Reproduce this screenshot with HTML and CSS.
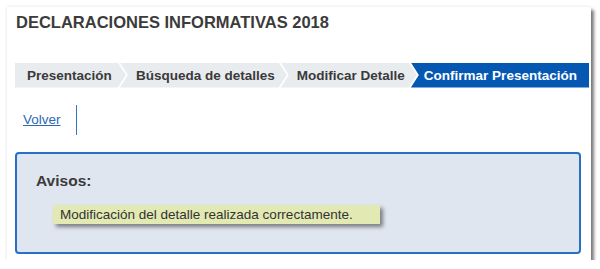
FILE: index.html
```html
<!DOCTYPE html>
<html lang="es">
<head>
<meta charset="utf-8">
<title>Declaraciones informativas 2018</title>
<link rel="stylesheet" href="styles.css">
</head>
<body>
<div class="frame">
  <h1 class="title">DECLARACIONES INFORMATIVAS 2018</h1>
  <ol class="steps">
    <li class="step first">Presentación</li>
    <li class="step">Búsqueda de detalles</li>
    <li class="step">Modificar Detalle</li>
    <li class="step active">Confirmar Presentación</li>
  </ol>
  <div class="actions">
    <a class="link" href="#">Volver</a>
    <span class="divider"></span>
  </div>
  <div class="avisos">
    <h2 class="avisos-title">Avisos:</h2>
    <div class="msg">Modificación del detalle realizada correctamente.</div>
  </div>
</div>
</body>
</html>
```

FILE: styles.css
```css
html, body {
  margin: 0;
  padding: 0;
  background: #ffffff;
}
body {
  padding: 7px 0 0 7px;
  font-family: "Liberation Sans", Arial, sans-serif;
  color: #3a3a3a;
}
.frame {
  box-sizing: border-box;
  width: 584px;
  height: 253px;
  background: #ffffff;
  padding: 0 2px 0 8px;
  box-shadow: 3px 3px 3px rgba(0, 0, 0, 0.5), 0 0 3px rgba(0, 0, 0, 0.12);
  overflow: hidden;
}
.title {
  margin: 4.5px 0 0 1px;
  font-size: 16.5px;
  line-height: 20px;
  font-weight: bold;
  color: #3b3b3b;
}
.steps {
  list-style: none;
  margin: 31px 0 0 0;
  padding: 0;
  display: flex;
  height: 25px;
}
.step {
  flex: 1 1 auto;
  background: #e9ecef;
  font-size: 13.5px;
  font-weight: bold;
  line-height: 25px;
  white-space: nowrap;
  text-align: center;
  padding: 0 10px 0 14px;
  margin-left: -6px;
  clip-path: polygon(0 0, calc(100% - 8px) 0, 100% 50%, calc(100% - 8px) 100%, 0 100%, 8px 50%);
}
.step.first {
  margin-left: 0;
  padding: 0 12px 0 10px;
  clip-path: polygon(0 0, calc(100% - 8px) 0, 100% 50%, calc(100% - 8px) 100%, 0 100%);
}
.step.active {
  background: #0558b2;
  color: #ffffff;
  text-align: left;
  clip-path: polygon(0 0, 100% 0, 100% 100%, 0 100%, 8px 50%);
  padding: 0 8px 0 13px;
}
.actions {
  display: flex;
  align-items: center;
  height: 30px;
  margin-top: 17px;
  padding-left: 8px;
}
.link {
  font-size: 13.5px;
  line-height: 30px;
  color: #2a6ab5;
  text-decoration: underline;
}
.divider {
  width: 1px;
  height: 30px;
  background: #2f78c4;
  margin-left: 15px;
}
.avisos {
  box-sizing: border-box;
  margin: 17px 8px 0 0;
  height: 102px;
  background: #dfe6ef;
  border: 2px solid #2471c6;
  border-radius: 4px;
  padding: 18px 0 0 19px;
}
.avisos-title {
  margin: 0;
  font-size: 15.5px;
  line-height: 18px;
  font-weight: bold;
  color: #3a3a3a;
}
.msg {
  display: inline-block;
  margin: 15px 0 0 17px;
  padding: 0 27px 0 7px;
  background: #e2e9b3;
  font-size: 13.5px;
  line-height: 19.5px;
  color: #333333;
  box-shadow: 3px 3px 4px rgba(0, 0, 0, 0.45);
}
```
